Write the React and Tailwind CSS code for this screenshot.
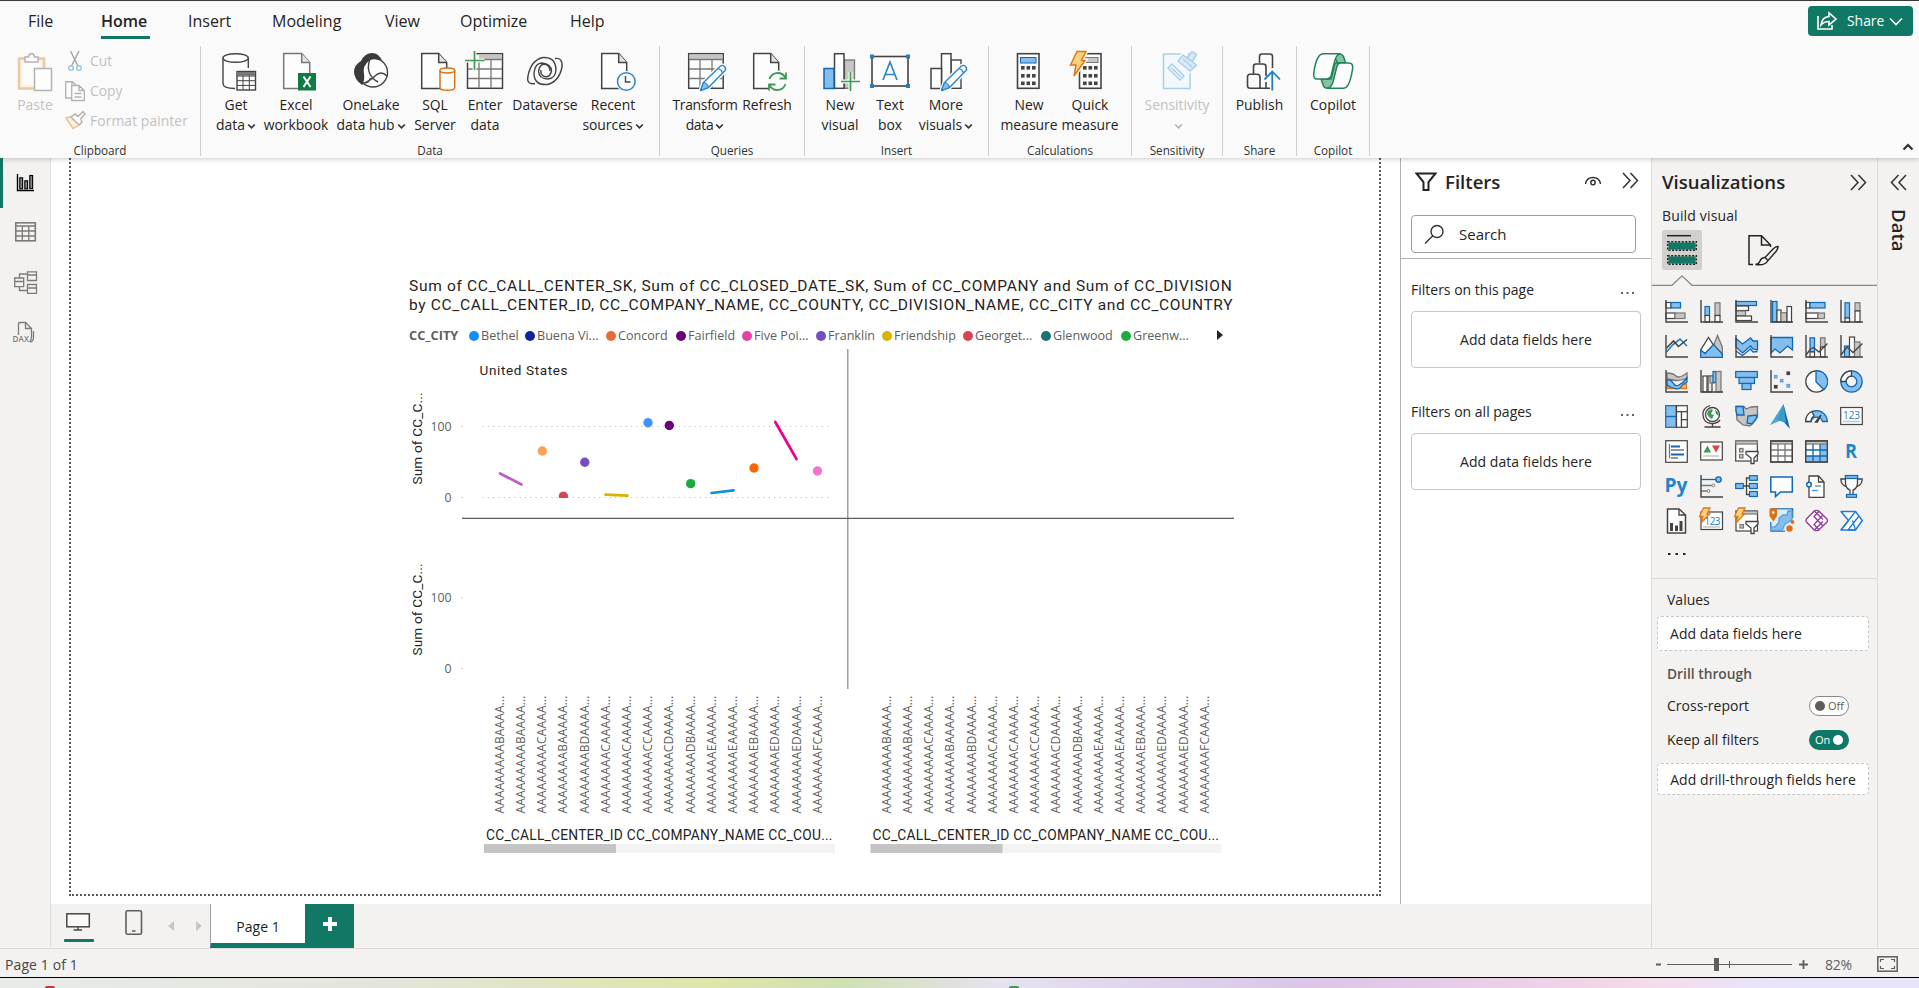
import React from 'react';

const K = '#444342';
const W = '#fdfdfd';
const B = '#83beec';
const BS = '#1267b4';
const G = '#c8c6c4';
const GS = '#797775';

/* ---------- ribbon drawings ---------- */

const Doc = ({ x, y = 53.5, w = 22, h = 35, s = K }) => (
  <g fill={W} stroke={s} strokeWidth="1.5">
    <path d={`M${x} ${y}H${x + w - 8}L${x + w} ${y + 9}V${y + h}H${x}Z`} />
    <path d={`M${x + w - 8} ${y}V${y + 9}H${x + w}`} fill="#e6e5e4" />
  </g>
);

const Pencil = ({ x, y }) => (
  <g transform={`translate(${x} ${y})`} strokeLinejoin="round">
    <path d="M0 26L3 18 20 1.500Q22 0 24 2T24.500 6L8 23Z" fill={W} stroke="#fafafa" strokeWidth="4" />
    <path d="M0 26L3 18 20 1.500Q22 0 24 2T24.500 6L8 23Z" fill={W} stroke="#2a86c8" strokeWidth="1.4" />
    <path d="M0 26L3 18Q7 18.500 8 23Z" fill={B} stroke="#2a86c8" strokeWidth="1.2" />
    <path d="M17.500 4Q21 5 22 8.500" fill="none" stroke="#2a86c8" strokeWidth="1.2" />
  </g>
);

const CalcBody = ({ x }) => (
  <g>
    <rect x={x} y="53.700" width="21.500" height="34.600" fill={W} stroke={K} strokeWidth="1.6" />
    {[66, 74, 81.5].map((y) =>
      [4, 9.5, 15].map((d) => <rect key={`${y}-${d}`} x={x + d - 0.5} y={y} width="3.600" height="3.600" fill={K} />)
    )}
  </g>
);

const art = {
  get: (
    <>
      <path d="M223 57.500V84C223 87 228 88.500 236 88.500V70H248V57.500" fill={W} />
      <path d="M223 58V83.500C223 87 229 88.500 235 88.500M248.300 58V68" fill="none" stroke={K} strokeWidth="1.4" />
      <ellipse cx="235.600" cy="58" rx="12.700" ry="4.300" fill={W} stroke={K} strokeWidth="1.4" />
      <rect x="237" y="71.500" width="18.500" height="18.500" fill={W} stroke={K} strokeWidth="1.4" />
      <rect x="237.600" y="72" width="17.300" height="3.600" fill={GS} />
      <path d="M237 76H255.500M237 80.700H255.500M237 85.400H255.500M243 76V90M249.300 76V90" stroke={K} fill="none" />
    </>
  ),
  excel: (
    <>
      <Doc x={283.7} w={26} s="#797775" />
      <rect x="298" y="73" width="18" height="17.500" fill="#107c41" />
      <path d="M303.500 76.500L310.500 87M310.500 76.500L303.500 87" stroke="#fff" strokeWidth="2" />
    </>
  ),
  onelake: (
    <>
      <circle cx="373" cy="72.500" r="14.500" fill={W} stroke={K} strokeWidth="1.4" />
      <path d="M361 61Q365 53 372 53Q379 53 382 61Q375 58 370 60Q362 66 364 74Q365 80 362 85Q354 79 354 72Q354 65 361 61Z" fill="#3b3a39" />
      <path d="M370 59Q367 67 369.500 73T378 82M362 84Q370 81 375 76Q381 70 387 76M363 83Q369 83 370.500 78" fill="none" stroke={K} strokeWidth="1.4" />
    </>
  ),
  sql: (
    <>
      <Doc x={421.7} w={25} />
      <path d="M440 70.500V87.500C440 89.800 443.500 90.300 447.300 90.300S454.700 89.800 454.700 87.500V70.500" fill={W} stroke="#d97318" strokeWidth="1.5" />
      <ellipse cx="447.300" cy="70.500" rx="7.400" ry="2.400" fill={W} stroke="#d97318" strokeWidth="1.5" />
    </>
  ),
  enter: (
    <>
      <rect x="467.500" y="53.700" width="35" height="34.600" fill={W} stroke={K} strokeWidth="1.5" />
      <rect x="479" y="54.500" width="22.800" height="4.500" fill={G} />
      <path d="M468 59.500H502M468 69H502M468 78.500H502M479 60V88M491 60V88" stroke={GS} strokeWidth="1.3" fill="none" />
      <rect x="463" y="51" width="10.500" height="8.500" fill="#fafafa" />
      <path d="M474.500 50V70M464 60.500H484.500" stroke="#fafafa" strokeWidth="4" />
      <path d="M474.500 51V70M465 60.500H484.500" stroke="#3f9b56" strokeWidth="1.7" />
    </>
  ),
  dataverse: (
    <g fill="none" stroke={K} strokeWidth="1.4">
      <path d="M535 83.500Q526 85 528 76Q531 60 543 57.500Q555 56.500 556 69Q556 78 548 79Q539 79 538.500 71Q540 63 546 64.500Q550 66 550 71" />
      <path d="M555 58.500Q563 57.500 562 67Q559 82 547 84.500Q534 85.500 534 73Q535 63 542 63Q551 64 551.500 71Q550 78 544.500 76.500Q540 75 541 70" />
    </g>
  ),
  recent: (
    <>
      <Doc x={601.7} w={25} />
      <circle cx="626.300" cy="81.500" r="10.500" fill="#fafafa" />
      <circle cx="626.300" cy="81.500" r="8.800" fill={W} stroke="#2a86c8" strokeWidth="1.5" />
      <path d="M625.500 76V82H630.500" fill="none" stroke={K} strokeWidth="1.4" />
    </>
  ),
  transform: (
    <>
      <rect x="688.700" y="53.700" width="34.500" height="34.600" fill={W} stroke={K} strokeWidth="1.5" />
      <rect x="689.500" y="54.500" width="33" height="4.500" fill={G} />
      <path d="M689 59.500H723M689 69H723M689 78.500H723M700 60V88M712 60V88" stroke={GS} strokeWidth="1.3" fill="none" />
      <Pencil x={700.5} y={64.5} />
    </>
  ),
  refresh: (
    <>
      <Doc x={753.7} w={25} />
      <circle cx="777.500" cy="81.500" r="11" fill="#fafafa" />
      <path d="M769.500 79Q771.500 73 778 73Q783 73 785.500 78M786 72.500V78.500H779.500M785.500 84Q783.500 90 777 90Q772 90 769.500 85M769 90.500V84.500H775.500" fill="none" stroke="#3f9b56" strokeWidth="1.8" />
    </>
  ),
  newvisual: (
    <>
      <rect x="844.500" y="60" width="10" height="28.300" fill={G} stroke={GS} strokeWidth="1.3" />
      <rect x="834.500" y="53.700" width="9.500" height="34.600" fill={W} stroke={K} strokeWidth="1.5" />
      <rect x="824" y="68.500" width="10" height="20" fill={B} stroke={BS} strokeWidth="1.5" />
      <rect x="851.500" y="82.500" width="8" height="8" fill="#fafafa" />
      <path d="M850.500 72V91M841 81.500H860" stroke="#fafafa" strokeWidth="4" />
      <path d="M850.500 72V91M841 81.500H860" stroke="#3f9b56" strokeWidth="1.7" />
    </>
  ),
  textbox: (
    <>
      <rect x="872" y="56.500" width="36" height="29.500" fill={W} stroke={K} strokeWidth="1.6" />
      {[[872, 56.5], [908, 56.5], [872, 86], [908, 86]].map(([x, y]) => (
        <rect key={`${x}${y}`} x={x - 2} y={y - 2} width="4" height="4" fill="#1f7fc4" />
      ))}
      <path d="M883 80L890 62 897 80M885.500 74.500H894.500" fill="none" stroke="#2a86c8" strokeWidth="1.7" />
    </>
  ),
  more: (
    <>
      <rect x="951" y="60" width="10" height="28.300" fill={W} stroke={K} strokeWidth="1.4" />
      <rect x="941.500" y="53.700" width="9.500" height="34.600" fill={W} stroke={K} strokeWidth="1.5" />
      <rect x="931" y="68.500" width="10.500" height="20" fill={W} stroke={K} strokeWidth="1.5" />
      <Pencil x={941.5} y={64.5} />
    </>
  ),
  newmeasure: (
    <>
      <CalcBody x={1017.5} />
      <rect x="1020.500" y="57.500" width="15.500" height="5.500" fill={B} stroke={BS} />
    </>
  ),
  quick: (
    <>
      <CalcBody x={1079.5} />
      <rect x="1084" y="57.500" width="14" height="5" fill={G} stroke={GS} />
      <path d="M1077 51.500H1086L1081.500 60.500H1085L1074 76 1076 65H1070.500Z" fill="#fafafa" stroke="#fafafa" strokeWidth="4" />
      <path d="M1077 51.500H1086L1081.500 60.500H1085L1074 76 1076 65H1070.500Z" fill="#fcd37c" stroke="#dd7a1c" strokeWidth="1.5" />
    </>
  ),
  sensitivity: (
    <g fill="#f3f8fc" stroke="#a9cfe8" strokeWidth="1.5">
      <path d="M1163.500 54H1190V88.500H1163.500Z" />
      <path d="M1178 60L1184 52.500 1198 65 1191 72Z" fill="#fafafa" stroke="#fafafa" strokeWidth="3" />
      <path d="M1187 58L1192 51.500 1196.500 54.500 1192 62Z" fill="#d5e8f5" />
      <path d="M1178 61L1183 55 1196.500 65 1190 71Z" fill="#dcebf6" />
      <path d="M1168 68L1172 64 1184 76 1180 80Z" />
      <path d="M1171 67.500L1181 77M1183 59L1192 67" />
    </g>
  ),
  publish: (
    <>
      <g fill="none" stroke={K} strokeWidth="1.6">
        <path d="M1259.500 63V56.500Q1259.500 54 1262 54H1270Q1272.500 54 1272.500 56.500V68M1253.500 74V66.500Q1253.500 64 1256 64H1263Q1266 64 1266 66.500V76M1266 82V88.300" />
        <path d="M1265.500 88.300H1250Q1247.500 88.300 1247.500 85.500V77Q1247.500 74.300 1250 74.300H1257Q1260 74.300 1260 77V88.300H1270" />
      </g>
      <path d="M1272.300 90.500V72.500M1264.500 79.500L1272.300 71.500 1280 79.500" fill="none" stroke="#1f7fc4" strokeWidth="1.8" />
    </>
  ),
  copilot: (
    <g stroke="#218358" strokeWidth="1.5" strokeLinejoin="round">
      <path d="M1333 53.700H1339Q1343 54 1344 58L1345.500 63H1335L1331 79H1321L1323.500 86Q1324.500 88.300 1328 88.300H1334L1339 66Z" fill="#86c2a4" />
      <path d="M1324 53.700H1340Q1337 54 1335 60L1331 76Q1330 79 1326 79H1317Q1313.500 79 1313.700 74Q1315 62 1318.500 57Q1320 53.700 1324 53.700Z" fill={W} />
      <path d="M1343 88.300H1327Q1331 88 1333 82L1337 66Q1338 63 1341 63H1349Q1353 63 1352.700 68Q1351 80 1348 85Q1346.500 88.300 1343 88.300Z" fill={W} />
    </g>
  ),
};

const Caret = ({ c = '#323130' }) => (
  <svg width="9" height="7" viewBox="0 0 9 7" className="ml-[2px] inline-block align-middle">
    <path d="M1.200 1.500L4.500 4.800 7.800 1.500" fill="none" stroke={c} strokeWidth="1.700" />
  </svg>
);

const Tool = ({ name, cx, width, l1, l2, caret, muted, tight }) => (
  <div className={`flex shrink-0 flex-col items-center whitespace-nowrap text-[13.9px] leading-[20px] ${width} ${muted ? 'text-[#c3c1bf]' : 'text-[#252423]'} ${tight ? 'tracking-[-0.3px]' : ''}`}>
    <svg width="48" height="44" viewBox={`${cx - 24} 50 48 44`} className="mb-px shrink-0">{art[name]}</svg>
    <span>{l1}</span>
    <span>{l2}{caret && <Caret c={muted ? '#b5b3b1' : '#323130'} />}</span>
  </div>
);

const Group = ({ label, width, pad = '', children }) => (
  <section className={`flex h-[110px] shrink-0 flex-col border-r border-[#d0cecc] ${width}`}>
    <div className={`flex h-[95px] shrink-0 pt-1 ${pad}`}>{children}</div>
    <div className="text-center text-[11.7px] leading-[18px] text-[#323130]">{label}</div>
  </section>
);

function Ribbon() {
  return (
    <header className="relative z-10 h-[158px] shrink-0 border-t border-[#3b3a39] bg-[#fafafa] shadow-[0_1px_5px_rgba(0,0,0,0.22)]">
      <div className="flex h-[45px] items-start justify-between">
        <nav className="flex pl-[28px] pt-[6px] text-[16px] leading-[28px] text-[#252423]">
          <span className="w-[73px]">File</span>
          <span className="w-[87px]"><span className="inline-block w-[49px] whitespace-nowrap border-b-[3px] border-[#117865] pb-px font-semibold">Home</span></span>
          <span className="w-[84px]">Insert</span>
          <span className="w-[113px]">Modeling</span>
          <span className="w-[75px]">View</span>
          <span className="w-[110px]">Optimize</span>
          <span>Help</span>
        </nav>
        <button className="mr-[6px] mt-[5px] flex h-[30px] w-[105px] items-center rounded bg-[#117865] pl-[8px] text-[13.9px] text-white">
          <svg width="22" height="20" viewBox="0 0 22 20" fill="none" stroke="#fff" strokeWidth="1.600">
            <path d="M2 5V18H16V14M13 2V5.500Q6 6 5 14Q8 10.500 13 10.500V14L20 8Z" />
          </svg>
          <span className="ml-[9px]">Share</span>
          <svg width="14" height="9" viewBox="0 0 14 9" className="ml-[5px]"><path d="M1 1.500L7 7.500 13 1.500" fill="none" stroke="#fff" strokeWidth="1.600" /></svg>
        </button>
      </div>
      <div className="flex">
        <Group label="Clipboard" width="w-[201px]">
          <div className="flex w-[62px] flex-col items-center pl-[8px] text-[13.9px] leading-[20px] text-[#c3c1bf]">
            <svg width="48" height="44" viewBox="14 50 48 44" className="mb-px shrink-0">
              <rect x="22" y="58.500" width="25" height="30" fill="#fdf1dc" stroke="#ecc8a0" strokeWidth="2.500" />
              <rect x="25.500" y="62" width="18" height="23" fill={W} />
              <path d="M28 62V57H31.500Q32 53.500 34.500 53.500T37.500 57H41V62Z" fill={W} stroke="#b5b3b1" strokeWidth="1.500" />
              <rect x="37.500" y="68.500" width="17" height="22" fill={W} stroke="#b5b3b1" strokeWidth="1.500" />
            </svg>
            <span>Paste</span>
          </div>
          <div className="flex flex-col pl-[2px] text-[13.9px] leading-[30px] text-[#c3c1bf]">
            <div className="-mt-[4px] flex items-center gap-[4px]">
              <svg width="22" height="22" viewBox="64 50 22 22" fill="none" strokeWidth="1.500">
                <path d="M70.500 51L78 66M79 51L71.500 66" stroke="#a9a7a5" />
                <circle cx="71" cy="68" r="2.300" stroke="#9cc6e3" /><circle cx="79" cy="68" r="2.300" stroke="#9cc6e3" />
              </svg>Cut
            </div>
            <div className="flex items-center gap-[4px]">
              <svg width="22" height="22" viewBox="64 80 22 22" fill={W} stroke="#b5b3b1" strokeWidth="1.400">
                <path d="M71.500 98H65.700V81.700H72.500L76 85M72 81.700V85.500" />
                <path d="M71.700 85.500H79L84.300 90.500V100.500H71.700ZM79 85.500V90.500H84M74.500 93.500H81.500M74.500 97H81.500" />
              </svg>Copy
            </div>
            <div className="flex items-center gap-[4px] tracking-[0.07px]">
              <svg width="22" height="22" viewBox="64 110 22 22" fill={W} strokeWidth="1.400">
                <path d="M66 118L73 128.500 80 124.500 73.500 116Z" fill="#fdeedd" stroke="#ecbf92" />
                <path d="M71 117L75 114 78 116.500 83 111.500 85 114 80.500 119 82 122 79 125Z" stroke="#b5b3b1" />
              </svg>Format painter
            </div>
          </div>
        </Group>
        <Group label="Data" width="w-[459px]" pad="pl-[10px]">
          <Tool name="get" cx={236} width="w-[50px]" l1="Get" l2="data" caret />
          <Tool name="excel" cx={296} width="w-[70px]" l1="Excel" l2="workbook" />
          <Tool name="onelake" cx={371} width="w-[80px]" l1="OneLake" l2="data hub" caret />
          <Tool name="sql" cx={435} width="w-[48px]" l1="SQL" l2="Server" />
          <Tool name="enter" cx={485} width="w-[52px]" l1="Enter" l2="data" />
          <Tool name="dataverse" cx={545} width="w-[68px]" l1="Dataverse" />
          <Tool name="recent" cx={613} width="w-[68px]" l1="Recent" l2="sources" caret />
        </Group>
        <Group label="Queries" width="w-[145px]" pad="pl-[12px]">
          <Tool name="transform" cx={705} width="w-[66px]" l1="Transform" l2="data" caret tight />
          <Tool name="refresh" cx={767} width="w-[58px]" l1="Refresh" />
        </Group>
        <Group label="Insert" width="w-[184px]" pad="pl-[12px]">
          <Tool name="newvisual" cx={840} width="w-[46px]" l1="New" l2="visual" />
          <Tool name="textbox" cx={890} width="w-[54px]" l1="Text" l2="box" />
          <Tool name="more" cx={946} width="w-[58px]" l1="More" l2="visuals" caret />
        </Group>
        <Group label="Calculations" width="w-[143px]" pad="pl-[12px]">
          <Tool name="newmeasure" cx={1029} width="w-[56px]" l1="New" l2="measure" />
          <Tool name="quick" cx={1090} width="w-[66px]" l1="Quick" l2="measure" />
        </Group>
        <Group label="Sensitivity" width="w-[91px]" pad="justify-center">
          <Tool name="sensitivity" cx={1177} width="w-[80px]" l1="Sensitivity" caret muted />
        </Group>
        <Group label="Share" width="w-[74px]" pad="justify-center">
          <Tool name="publish" cx={1260} width="w-[70px]" l1="Publish" />
        </Group>
        <Group label="Copilot" width="w-[73px]" pad="justify-center">
          <Tool name="copilot" cx={1333} width="w-[70px]" l1="Copilot" />
        </Group>
        <svg width="12" height="8" viewBox="0 0 12 8" className="ml-auto mr-[5px] mt-[97px]"><path d="M1.500 6.500L6 2 10.500 6.500" fill="none" stroke="#323130" strokeWidth="2.200" /></svg>
      </div>
    </header>
  );
}

/* ---------- left rail ---------- */

function Rail() {
  return (
    <aside className="flex w-[51px] shrink-0 flex-col border-r border-[#e1dfdd] bg-[#f3f2f1]">
      <div className="h-[50px] border-l-[3px] border-[#117865]">
        <svg width="44" height="50" viewBox="3 158 44 50" fill="#8a8886" stroke="#000" strokeWidth="1.100">
          <path d="M17.500 174V190.500H34" fill="none" strokeWidth="1.400" />
          <rect x="19.800" y="177.800" width="2.800" height="11" /><rect x="24.800" y="180.800" width="2.800" height="8" /><rect x="29.800" y="175.500" width="2.800" height="13" />
        </svg>
      </div>
      <svg width="50" height="50" viewBox="0 208 50 50" fill="none" stroke="#7d7b79" strokeWidth="1.300">
        <rect x="15.800" y="222.800" width="19.500" height="18" strokeWidth="1.600" /><path d="M16 226H35M16 231H35M16 236H35M22.300 226V241M28.800 226V241" />
      </svg>
      <svg width="50" height="50" viewBox="0 258 50 50" fill="none" stroke="#7d7b79" strokeWidth="1.300">
        <path d="M14.700 278H23.700V286.700H14.700ZM14.700 281.500H23.700M27.500 271.800H36.500V280.500H27.500ZM27.500 275H36.500M27.500 284.500H36.500V293.300H27.500ZM27.500 288H36.500M19.500 278V274H27.500M19.500 286.700V290.500H27.500" />
      </svg>
      <svg width="50" height="50" viewBox="0 308 50 50" fill="none" stroke="#7d7b79" strokeWidth="1.300">
        <path d="M18.500 335V324Q18.500 322.500 20 322.500H25.500L31.500 328.500V337Q31.500 340 29.500 342M25.500 322.500V328.500H31.500M33.500 331V337Q33.500 341 30.500 342.200" />
        <text x="12.500" y="342.300" fontSize="8" fontFamily="Open Sans" fontWeight="600" fill="#7d7b79" stroke="none" textLength="16.500">DAX</text>
      </svg>
    </aside>
  );
}

/* ---------- report canvas ---------- */

const legend = [
  ['Bethel', '#118dff', 'w-[56px]'], ['Buena Vi...', '#12239e', 'w-[81px]'], ['Concord', '#e66c37', 'w-[70px]'],
  ['Fairfield', '#6b007b', 'w-[66px]'], ['Five Poi...', '#e044a7', 'w-[74px]'], ['Franklin', '#744ec2', 'w-[66px]'],
  ['Friendship', '#d9b300', 'w-[81px]'], ['Georget...', '#d64550', 'w-[78px]'], ['Glenwood', '#197278', 'w-[80px]'],
  ['Greenw...', '#1aab40', 'w-[91px]'],
];

const dots = [
  [542.3, 452, '#ffa058'], [584.8, 463.3, '#744ec2'], [648, 423.7, '#4092ff'], [669.3, 426.5, '#6b007b'],
  [690.7, 484.6, '#1aab40'], [754, 469, '#fe6600'], [817.5, 472, '#f472d0'],
];
const segs = [
  [500, 474.5, 521.5, 485.5, '#be5dc9'], [605.5, 495.7, 627.5, 496.6, '#d9b300'],
  [711.5, 494, 733.5, 491.4, '#1090d8'], [775.3, 423, 796.5, 460, '#ec008c'],
];

const suffix = ['AB', 'AB', 'AC', 'BA', 'BD', 'CA', 'CA', 'CC', 'CD', 'DB', 'EA', 'EA', 'EB', 'ED', 'ED', 'FC'];

function Plot() {
  const ui = 'Open Sans, sans-serif';
  const din = 'Roboto, sans-serif';
  return (
    <svg width="830" height="510" viewBox="409 350 830 510" className="block">
      <path d="M847.800 350V690" stroke="#8f8d8b" strokeWidth="1.300" />
      <path d="M462 519.300H1234" stroke="#605e5c" strokeWidth="1.200" />
      <text x="479.500" y="376" fontFamily={din} fontSize="13.500" fill="#252423" textLength="88">United States</text>
      {[[427.5, '100'], [498.5, '0'], [598.5, '100'], [669.5, '0']].map(([y, t]) => (
        <g key={y}>
          <text x="451.500" y={y + 4.2} fontFamily={ui} fontSize="12.300" fill="#605e5c" textAnchor="end">{t}</text>
          <path d={`M461 ${y}H462.500`} stroke="#c8c6c4" />
        </g>
      ))}
      <path d="M482.500 427.500H832M482.500 498.500H832" stroke="#c8c6c4" strokeWidth="1.200" strokeDasharray="1.300 4" />
      {dots.map(([x, y, c]) => <circle key={x} cx={x} cy={y} r="4.700" fill={c} />)}
      <path d="M559.200 499A4.600 4.600 0 1 1 567.600 499Z" fill="#d64550" />
      {segs.map(([x1, y1, x2, y2, c]) => <path key={x1} d={`M${x1} ${y1}L${x2} ${y2}`} stroke={c} strokeWidth="2.700" strokeLinecap="round" />)}
      {[485.5, 656.5].map((y) => (
        <text key={y} transform={`translate(422 ${y}) rotate(-90)`} fontFamily={din} fontSize="13.600" fill="#252423" textLength="92">Sum of CC_C...</text>
      ))}
      {[499.5, 886.5].map((x0) => suffix.map((s, i) => (
        <text key={`${x0}-${i}`} transform={`translate(${x0 + i * 21.2 + 4.2} 814.500) rotate(-90)`} fontFamily={ui} fontSize="12" fill="#605e5c" textLength="118">
          {`AAAAAAAA${s}AAAA...`}
        </text>
      )))}
      {[486, 872.5].map((x) => (
        <g key={x}>
          <text x={x} y="840.700" fontFamily={din} fontSize="13.800" fill="#252423" textLength="346.500">CC_CALL_CENTER_ID CC_COMPANY_NAME CC_COU...</text>
          <rect x={x - 2} y="845" width="351" height="9" fill="#f3f3f3" />
          <rect x={x - 2} y="845" width="132" height="9" fill="#c4c4c4" />
        </g>
      ))}
    </svg>
  );
}

function Canvas() {
  return (
    <main className="h-[746px] bg-white pl-[18px]">
      <div className="h-[738px] w-[1312px] border-2 border-t-0 border-dotted border-[#5a5856] pl-[338px] pt-[119px]">
        <h2 className="whitespace-nowrap font-[Roboto] text-[15.5px] leading-[19px] text-[#252423]">
          <span className="block tracking-[0.69px]">Sum of CC_CALL_CENTER_SK, Sum of CC_CLOSED_DATE_SK, Sum of CC_COMPANY and Sum of CC_DIVISION</span>
          <span className="block tracking-[0.66px]">by CC_CALL_CENTER_ID, CC_COMPANY_NAME, CC_COUNTY, CC_DIVISION_NAME, CC_CITY and CC_COUNTRY</span>
        </h2>
        <div className="mt-[11px] flex h-[20px] items-center whitespace-nowrap text-[12.6px] text-[#605e5c]">
          <span className="w-[60px] text-[12.8px] font-bold">CC_CITY</span>
          {legend.map(([t, c, w]) => (
            <span key={t} className={`flex shrink-0 items-center gap-[2px] ${w}`}>
              <svg width="10" height="10"><circle cx="5" cy="5" r="5" fill={c} /></svg>{t}
            </span>
          ))}
          <svg width="6" height="10" viewBox="0 0 6 10" className="-mt-[2px] ml-[5px]"><path d="M0 0L6 5 0 10Z" fill="#252423" /></svg>
        </div>
        <div className="mt-[3px]"><Plot /></div>
      </div>
    </main>
  );
}

function PageTabs() {
  return (
    <div className="flex h-[44px] bg-[#f3f2f1]">
      <svg width="159" height="44" viewBox="51 904 159 44" fill="none">
        <rect x="66.800" y="913.800" width="22.500" height="13" fill="#faf9f8" stroke="#494745" strokeWidth="1.500" />
        <path d="M78 927V930M73.500 930H82" stroke="#494745" strokeWidth="1.400" />
        <rect x="64" y="939" width="30" height="3" rx="1" fill="#117865" />
        <rect x="126" y="910.800" width="15.500" height="23.500" rx="1.500" stroke="#605e5c" strokeWidth="1.600" />
        <path d="M132 931H135.500" stroke="#605e5c" strokeWidth="1.500" />
        <path d="M174 921V931L168 926ZM196 921V931L202 926Z" fill="#c8c6c4" />
      </svg>
      <div className="flex h-[44px] w-[95px] items-center justify-center border-b-[5px] border-l border-b-[#117865] border-l-[#a19f9d] bg-white pt-[6px] text-[14px] font-medium text-[#201f1e]">Page 1</div>
      <div className="flex h-[44px] w-[49px] items-center justify-center bg-[#117865] pb-[4px]">
        <svg width="14" height="14"><path d="M7 0V14M0 7H14" stroke="#fff" strokeWidth="4" /></svg>
      </div>
    </div>
  );
}

/* ---------- panes ---------- */

const Chevrons = ({ flip }) => (
  <svg width="17" height="17" viewBox="0 0 17 17" className={flip ? '-scale-x-100' : ''}>
    <path d="M1 1L8 8.500 1 16M8.500 1L15.500 8.500 8.500 16" fill="none" stroke="#323130" strokeWidth="1.500" />
  </svg>
);

const Well = ({ title, mt }) => (
  <div className={mt}>
    <div className="flex h-[20px] items-center justify-between pr-[16px]">
      <span>{title}</span>
      <svg width="15" height="4" className="mt-[8px]"><path d="M1 2H3M6.500 2H8.500M12 2H14" stroke="#323130" strokeWidth="1.500" /></svg>
    </div>
    <div className="mt-[12px] flex h-[57px] w-[230px] items-center justify-center rounded-sm border border-[#c8c6c4] tracking-[0.05px]">Add data fields here</div>
  </div>
);

function Filters() {
  return (
    <aside className="h-[746px] w-[251px] shrink-0 border-l border-[#b3b0ad] bg-white text-[14px] text-[#252423]">
      <div className="flex h-[101px] flex-col border-b border-[#b3b0ad] px-[10px] pt-[10px]">
        <div className="flex h-[28px] items-center">
          <svg width="22" height="20" viewBox="0 0 22 20" className="ml-[4px]"><path d="M1.500 1.500H20.500L13.500 10V18H8.500V10Z" fill="none" stroke="#252423" strokeWidth="2" /></svg>
          <span className="ml-[8px] w-[139px] text-[18.6px] font-semibold">Filters</span>
          <svg width="18" height="10" viewBox="0 0 18 10" fill="none" stroke="#323130" strokeWidth="1.400" className="-mt-[2px]"><path d="M1.500 8Q2.500 1.500 9 1.500T16.500 8" /><circle cx="9" cy="6.500" r="2.200" /></svg>
          <span className="-mt-[3px] ml-[20px]"><Chevrons /></span>
        </div>
        <div className="mt-[19px] flex h-[38px] w-[225px] shrink-0 items-center rounded-sm border border-[#a19f9d] pl-[12px] text-[15px]">
          <svg width="21" height="21" viewBox="0 0 21 21" fill="none" stroke="#323130" strokeWidth="1.400"><circle cx="13" cy="7.500" r="6" /><path d="M8.800 11.700L1 19.500" /></svg>
          <span className="ml-[14px]">Search</span>
        </div>
      </div>
      <div className="pl-[10px]">
        <Well title="Filters on this page" mt="mt-[20px]" />
        <Well title="Filters on all pages" mt="mt-[33px]" />
      </div>
    </aside>
  );
}

const Axis = () => <path d="M1 0V22H23" fill="none" stroke={K} strokeWidth="1.400" />;
const R = ({ x, y, w, h, f = W, s = K }) => <rect x={x} y={y} width={w} height={h} fill={f} stroke={s} strokeWidth="1.200" />;
const Bl = (p) => <R f={B} s={BS} {...p} />;
const Gr = (p) => <R f={G} s={GS} {...p} />;
const Bolt = () => <path d="M3.500 -2H10L7 4H9.500L1 13 3 6.500H-.500Z" fill="#fcd37c" stroke="#dd7a1c" strokeWidth="1.300" />;
const Funnel = () => <path d="M11 11.500H23V14L19 18V23.500H16V18L11 14Z" fill={W} stroke={K} strokeWidth="1.300" />;
const L = ({ d, s = K, f = 'none', w = 1.3 }) => <path d={d} fill={f} stroke={s} strokeWidth={w} />;

const visuals = [
  <><R x={1} y={2.5} w={5} h={5.5} /><Bl x={6} y={2.5} w={9.5} h={5.5} /><R x={1} y={13} w={9} h={5.5} /><Gr x={10} y={13} w={10} h={5.5} /><Axis /></>,
  <><Bl x={5} y={6.5} w={4.5} h={9} /><R x={5} y={15.5} w={4.5} h={6.5} /><Gr x={15} y={2.8} w={5} h={12.5} /><R x={15} y={15.5} w={5} h={6.5} /><Axis /></>,
  <><Bl x={1} y={1.5} w={20.5} h={4} /><R x={1} y={6} w={12.5} h={4.5} /><Gr x={1} y={11} w={9.5} h={5} /><R x={1} y={16} w={15.5} h={4.5} /><Axis /></>,
  <><Bl x={2.5} y={1.5} w={4.5} h={20.5} /><R x={7} y={10} w={4} h={12} /><Gr x={11} y={12.7} w={6} h={9.3} /><R x={17} y={6.5} w={4.5} h={15.5} /><Axis /></>,
  <><R x={1} y={2.5} w={4} h={5.5} /><Bl x={5} y={2.5} w={15} h={5.5} /><R x={1} y={13} w={12} h={5.5} /><Gr x={13} y={13} w={6.5} h={5.5} /><Axis /></>,
  <><Bl x={5} y={2.8} w={4.5} h={15.2} /><R x={5} y={18} w={4.5} h={4} /><Gr x={15} y={2.8} w={5} h={8} /><R x={15} y={11} w={5} h={11} /><Axis /></>,
  <><L d="M1.500 17L8 9.500 15 4 22 11" s="#1f7fc4" w={1.6} /><L d="M1.500 13L8.500 6 13.500 11.500 22 4.500" w={1.6} /><Axis /></>,
  <><L d="M.700 15L8.500 2.500 14 11V18H.700Z" f={W} /><L d="M13 12L17.500 .500 22.300 12V22H13Z" s={GS} f={G} /><L d="M.700 15L5 18.500 13.500 9.500 22.300 19V22.300H.700Z" s={BS} f={B} /></>,
  <><L d="M1 3.500L7.500 9 15.500 3 18 6 22.500 6V15L18 14 15.500 11 7.500 18 1 12Z" s={BS} f={B} /><L d="M1 16L7.500 20.500 15.500 14 18 17 22.500 16.500" s={BS} /><Axis /></>,
  <><L d="M1 2.500H22.500V15L17.500 11 10 18 5 14 1 18Z" s={BS} f={B} /><Axis /></>,
  <><Bl x={5} y={2.8} w={4.5} h={14} /><R x={5} y={17} w={4.5} h={5} /><Gr x={15.5} y={2.8} w={4.5} h={9} /><R x={15.5} y={12} w={4.5} h={10} /><L d="M1 20L5.500 14 8.500 12.500 14 17 22.500 8.500" /><Axis /></>,
  <><Bl x={4.5} y={11} w={5} h={11} /><R x={9.5} y={2} w={5} h={20} /><Gr x={14.5} y={7} w={5.5} h={15} /><L d="M1 20L7 12 13 17.500 22.500 8.500" /><Axis /></>,
  <><L d="M2 14H9Q12 20 16 14H21.500V18.500H2Z" s="#dd7a1c" f="#f7b26a" /><L d="M2 3Q8 3 11 6T22 3V8Q15 11 11 10.500T2 9Z" s={GS} f={G} /><L d="M2 10Q6 9 8 13T14 15 22 8V12Q18 14 16 17T8 18 2 14Z" s={BS} f={B} /><Axis /></>,
  <><R x={3} y={6} w={4} h={16} /><R x={8} y={6} w={4} h={16} f="#e6e5e4" /><Gr x={10} y={6} w={4} h={7} /><Bl x={13} y={1.5} w={3} h={11} /><Gr x={16} y={1.5} w={5} h={20.5} /><Axis /></>,
  <><Bl x={0.7} y={1.5} w={21.6} h={6} /><Bl x={4} y={7.5} w={15.5} h={6} /><Bl x={7} y={13.5} w={9} h={6} /></>,
  <><Bl x={4.5} y={5.5} w={2.4} h={2.4} s="#5ba0dc" /><Bl x={10.5} y={9.5} w={2.4} h={2.4} s="#5ba0dc" /><Bl x={17} y={14.5} w={2.6} h={2.6} s="#5ba0dc" /><R x={4.5} y={15.5} w={2.5} h={2.5} f={K} /><R x={17} y={2} w={2.5} h={2.5} f={K} /><Axis /></>,
  <><circle cx="11.500" cy="11.500" r="10.700" fill={W} stroke={K} strokeWidth="1.300" /><L d="M11 .800A10.700 10.700 0 0 1 19 19.500L11 12Z" s={BS} f={B} /></>,
  <><circle cx="11.500" cy="11.500" r="8" fill="none" stroke={BS} strokeWidth="6.600" /><circle cx="11.500" cy="11.500" r="8" fill="none" stroke={B} strokeWidth="4.200" /><L d="M.800 11.500A10.700 10.700 0 0 1 11.500 .800V6A5.500 5.500 0 0 0 6 11.500Z" f={W} /></>,
  <><Bl x={0.7} y={0.7} w={10.5} h={21.6} /><L d="M.700 11.500H11" s={BS} /><R x={11.5} y={0.7} w={10.8} h={6} /><R x={11.5} y={6.7} w={5} h={15.6} /><R x={16.5} y={6.7} w={5.8} h={8} /><R x={16.5} y={14.7} w={5.8} h={7.6} /></>,
  <><circle cx="12.500" cy="9.500" r="7" fill={W} stroke={K} strokeWidth="1.300" /><path d="M8 6Q11 3 13 5L11 9 14 10 12 14Q8 12 7 9ZM15 5L18.500 7V11L16 9Z" fill="#3f9b56" /><L d="M10 .500Q2 3 3 10.500T11 18.500Q17 19 20 15M12.500 19V22M4.500 22H20.500" /></>,
  <><L d="M1 1.500H9L11 4 16 2 22.500 1.500V12L18 18 15 21 8 20 2 15Z" s={GS} f={G} /><L d="M1 1.500H8L9 10H2L1 6Z" s={BS} f={B} /><L d="M13 11L22 10 21 14 17 19 12 18Z" s={BS} f={B} /></>,
  <><path d="M13.500 -1L0 20 12 15Z" fill="#4ba5d8" /><path d="M13.500 -1L20 24 12 15Z" fill="#1267b4" /><path d="M13.500 -1L16 18 7 15Z" fill="#3c9bc9" /></>,
  <><L d="M.700 16.500A10.800 10.800 0 0 1 22.300 16.500H17.500A6 6 0 0 0 6 16.500Z" s={BS} f={B} /><L d="M.700 16.500A10.800 10.800 0 0 1 7 6.500L9 11A6 6 0 0 0 6 16.500Z" f={W} /><L d="M10.500 17L16 10 12.500 17Z" f={K} /></>,
  <><R x={0.7} y={2.5} w={21.6} h={17} /><text x="3" y="13.500" fontSize="10" fontFamily="Open Sans" fill="#1f7fc4" textLength="17">123</text><L d="M3 16.500H20" s={G} w={1.5} /></>,
  <><R x={0.7} y={0.7} w={21.6} h={21.6} /><L d="M4.500 4V18.500" s={GS} /><L d="M6 6.500H15M6 14.500H19" s={BS} w={2} /><L d="M6 10H19M6 18H13" s={GS} /></>,
  <><R x={0.7} y={2} w={21.6} h={18} /><path d="M3.500 12.500L7.500 5.500 11 12.500Z" fill="#3f9b56" /><path d="M12 5.500H20L16 12.500Z" fill="#e04046" /><L d="M3 16H19" s={G} w={1.5} /></>,
  <><R x={0.7} y={1} w={21.6} h={20} /><Gr x={0.7} y={1} w={21.6} h={3} /><Gr x={4.5} y={8.5} w={3.5} h={3.5} /><Gr x={4.5} y={14.5} w={3.5} h={3.5} /><Funnel /></>,
  <><R x={0.7} y={1} w={21.6} h={21} /><Gr x={0.7} y={1} w={21.6} h={3} /><L d="M1 10H22M1 16H22M8 4V22M15 4V22" s={GS} /><L d="M.700 1H22.300V22H.700Z" /></>,
  <><R x={0.7} y={1} w={21.6} h={21} /><rect x="1" y="16" width="21" height="5.700" fill={B} /><rect x="15" y="4" width="7" height="12" fill={B} /><Gr x={0.7} y={1} w={21.6} h={3} /><L d="M1 10H22M1 16H22M8 4V22M15 4V22" s={BS} /><L d="M.700 1H22.300V22H.700Z" /></>,
  <text x="5" y="18" fontSize="19" fontFamily="Open Sans" fontWeight="700" fill="#1f86c8" textLength="12" lengthAdjust="spacingAndGlyphs">R</text>,
  <text x="-0.500" y="16.500" fontSize="20" fontFamily="Open Sans" fontWeight="700" fill="#1f86c8" textLength="23" lengthAdjust="spacingAndGlyphs">Py</text>,
  <><L d="M1 4.500H16" s={BS} /><circle cx="18.500" cy="4.500" r="2.700" fill={B} stroke={BS} strokeWidth="1.300" /><L d="M1 10.500H12M1 16H7" s={GS} /><circle cx="13.500" cy="10.500" r="1.400" fill={W} stroke={GS} /><circle cx="8.500" cy="16" r="1.400" fill={W} stroke={GS} /><Axis /></>,
  <><L d="M8 11H15M15 3H11.500V19.500H15" /><Bl x={0.7} y={8.5} w={7.5} h={5} /><Bl x={14.5} y={0.7} w={7.8} h={4.6} /><Bl x={14.5} y={8.5} w={7.8} h={5} /><Bl x={14.5} y={16.5} w={7.8} h={5} /></>,
  <L d="M.800 2H22.300V17H10.500L5.500 21.500V17H.800Z" s={BS} f={W} w={1.5} />,
  <><L d="M4 7V1H13.500L19 7V22.300H4V12" f={W} /><L d="M13.500 1V7H19" /><L d="M10 11H16M7 15.500H13" s="#5ba0dc" /><circle cx="4" cy="9.500" r="2.300" fill={W} stroke={BS} strokeWidth="1.500" /></>,
  <><L d="M5.500 4H.800Q1 10 6 11.500M17.500 4H22.200Q22 10 17 11.500" /><L d="M5.500 1H17.500V9Q16.500 14 13 15V20H10V15Q6.500 14 5.500 9Z" f={W} /><Bl x={5.5} y={0.5} w={12} h={3} /><Bl x={6.5} y={19.5} w={10} h={2.8} /></>,
  <><L d="M2.500 -1H14L20.500 5V23H2.500Z" f={W} w={1.5} /><L d="M14 -1V5H20.500" /><path d="M5 13H8V21H5ZM10 15.500H13V21H10ZM14.500 11H17.500V21H14.500Z" fill={K} /></>,
  <><R x={1} y={2} w={21.5} h={17.5} /><text x="4.500" y="14.500" fontSize="10" fontFamily="Open Sans" fill="#1f7fc4" textLength="16">123</text><L d="M3 17H20" s={G} w={1.5} /><Bolt /></>,
  <><R x={1} y={1} w={21.5} h={20} /><Gr x={1} y={1} w={21.5} h={3} /><Gr x={5} y={14.5} w={3.5} h={3.5} /><Funnel /><Bolt /></>,
  <><L d="M1 -1H22.500V8M15 21H1V12M22.500 -1H9" s={BS} w={1.6} /><rect x="1.500" y="-.500" width="20" height="21" fill="#dceefa" /><L d="M1 20.500V17H5L9 12V8L13 5H17L18 1H22V10L15 14 12 20.500Z" s="#5ba0dc" f={B} /><path d="M-.500 -1.500H7V6L3.500 11.500 -.500 6Z" fill="#e07010" /><circle cx="3.200" cy="2.500" r="1.200" fill="#fff" /><circle cx="19.500" cy="18.500" r="3.200" fill="#e07010" /><circle cx="22.500" cy="12" r="1.900" fill="#e07010" /></>,
  <g fill="none" stroke="#8f3f9d" strokeWidth="1.400" strokeLinejoin="round"><path d="M14 1.200Q11.500 -.500 9 1.200L1.500 9Q.300 10.500 1.500 12L9 19.800Q11.500 21.500 14 19.800L22 12Q23 10.500 22 9Z" fill={W} /><path d="M9.500 1.200L18 9.500M14 1.200L9 6.500 17.500 15.500M17.500 5.500L9 14.500 14 19.800M9.500 19.800L18 11.500" /></g>,
  <g fill="none" stroke="#1f7fd6" strokeWidth="1.500" strokeLinejoin="round"><path d="M1 1.500H15.500L22.300 10.500 15.500 20H1L8.500 10.500Z" fill={W} /><path d="M1 20L15.500 1.500M8 20L19 6M12.500 10.500L15.500 20H8" strokeWidth="1.300" /></g>,
];

function Visualizations() {
  return (
    <aside className="flex w-[227px] shrink-0 flex-col border-x border-[#dddbd9] bg-[#f3f2f1] text-[14px] text-[#252423]">
      <div className="flex h-[48px] items-center justify-between pl-[10px] pr-[10px]">
        <span className="text-[18.6px] font-semibold">Visualizations</span><Chevrons />
      </div>
      <div className="-mt-[1px] h-[25px] pl-[10px] font-medium leading-[22px] tracking-[0.15px]">Build visual</div>
      <svg width="225" height="56" viewBox="1652 230 225 56" className="shrink-0">
        <rect x="1662" y="230" width="40" height="40" rx="2" fill="#d2d0ce" />
        <path d="M1667 235.700H1691" stroke="#252423" strokeWidth="1.500" />
        <g fill="#117865" stroke="#d2d0ce" strokeWidth="1.500"><rect x="1667.700" y="241.700" width="28.600" height="8.600" /><rect x="1667.700" y="255.700" width="28.600" height="8.600" /></g>
        <g fill="none" stroke="#252423" strokeWidth="1.500" strokeDasharray="2 1.500"><rect x="1667.700" y="241.700" width="28.600" height="8.600" /><rect x="1667.700" y="255.700" width="28.600" height="8.600" /></g>
        <path d="M1753 264.500H1749V235.700H1761.500L1770.500 245V247M1761.500 236V245H1770" fill="none" stroke="#252423" strokeWidth="1.500" />
        <path d="M1778 246.500Q1776 246 1773 249L1765 257.500 1768 260.500 1776 251.500Q1778.500 248 1778 246.500ZM1764.500 257.500Q1761 258 1760 261T1755.500 264.500Q1765 266 1768 260.500" fill="none" stroke="#252423" strokeWidth="1.400" />
        <path d="M1652 285.300H1672L1682 275.800 1692 285.300H1877" fill="none" stroke="#8a8886" strokeWidth="1.200" />
      </svg>
      <div className="mt-[14px] grid grid-cols-6 auto-rows-[35px] pl-[13px] pr-[2px]">
        {visuals.map((v, i) => <svg key={i} width="24" height="24" viewBox="0 0 24 24" className="overflow-visible">{v}</svg>)}
      </div>
      <div className="h-[34px] border-b border-[#dddbd9] pl-[16px] pt-[7px]">
        <svg width="20" height="4"><path d="M0 2H2.500M7.500 2H10M15 2H17.500" stroke="#252423" strokeWidth="2" /></svg>
      </div>
      <div className="mt-[10px] pl-[15px] leading-[22px]">Values</div>
      <div className="ml-[5px] mt-[5px] flex h-[35px] w-[212px] items-center rounded-sm border border-dashed border-[#c8c6c4] bg-white pl-[12px] tracking-[0.05px]">Add data fields here</div>
      <div className="mt-[12px] pl-[15px] text-[13.8px] font-semibold leading-[22px] text-[#555351]">Drill through</div>
      <div className="mt-[11px] flex h-[20px] items-center justify-between pl-[15px] pr-[28px]">
        <span className="-mt-px">Cross-report</span>
        <span className="flex h-[20px] w-[40px] items-center gap-[3px] rounded-full border border-[#8a8886] bg-white pl-[5px] text-[11px] text-[#605e5c]"><i className="h-[10px] w-[10px] shrink-0 rounded-full bg-[#605e5c]" />Off</span>
      </div>
      <div className="mt-[14px] flex h-[20px] items-center justify-between pl-[15px] pr-[28px]">
        <span className="-mt-px">Keep all filters</span>
        <span className="flex h-[20px] w-[40px] items-center gap-[3px] rounded-full bg-[#117865] pl-[6px] text-[11px] text-white">On<i className="h-[10px] w-[10px] shrink-0 rounded-full bg-white" /></span>
      </div>
      <div className="ml-[5px] mt-[13px] flex h-[32px] w-[212px] items-center justify-center whitespace-nowrap rounded-sm border border-dashed border-[#c8c6c4] bg-white tracking-[0.07px]">Add drill-through fields here</div>
    </aside>
  );
}

function StatusBar() {
  return (
    <footer className="flex h-[29px] shrink-0 items-center border-t border-[#dddbd9] bg-[#f3f2f1] pl-[5px] pt-[2px] text-[14px] text-[#484644]">
      <span className="tracking-[0.1px]">Page 1 of 1</span>
      <svg width="155" height="16" viewBox="1655 955 155 16" className="ml-auto">
        <path d="M1656 963.500H1661M1799 963.500H1808M1803.500 959V968" stroke="#605e5c" strokeWidth="1.800" />
        <path d="M1667 963.500H1792M1729.500 960V967" stroke="#605e5c" />
        <rect x="1714" y="957" width="5" height="13" fill="#605e5c" />
      </svg>
      <span className="ml-[15px] w-[52px] tracking-[-0.3px] text-[#605e5c]">82%</span>
      <svg width="21" height="16" viewBox="0 0 21 16" className="mr-[21px]" fill="none" stroke="#605e5c">
        <rect x=".800" y=".800" width="19.400" height="14.400" strokeWidth="1.500" />
        <path d="M3.500 6V3.500H7M14 3.500H17.500V6M17.500 10V12.500H14M7 12.500H3.500V10" strokeWidth="1.200" />
      </svg>
    </footer>
  );
}

export default function App() {
  return (
    <div className="flex h-[988px] w-[1919px] flex-col overflow-hidden bg-white font-['Open_Sans',sans-serif]">
      <Ribbon />
      <div className="flex h-[790px] shrink-0">
        <Rail />
        <div className="flex w-[1600px] flex-col">
          <div className="flex">
            <div className="w-[1349px]"><Canvas /></div>
            <Filters />
          </div>
          <PageTabs />
        </div>
        <Visualizations />
        <aside className="flex w-[41px] flex-col items-center bg-[#f3f2f1] pt-[16px]">
          <Chevrons flip />
          <span className="mt-[18px] text-[18.6px] font-semibold leading-[22px] text-[#252423] [writing-mode:vertical-rl]">Data</span>
        </aside>
      </div>
      <StatusBar />
      <div className="flex h-[11px] items-end border-t border-black bg-[linear-gradient(90deg,#e8ebe8_0%,#e3e5dc_20%,#dfe5a8_37%,#cfe0b4_44%,#e6e2ee_52%,#d9c6e8_68%,#f0d3e6_82%,#f3dcea_86%,#e9e4f8_92%,#e8e4fa_100%)]">
        <i className="ml-[45px] h-[2px] w-[10px] rounded-t-full bg-[#c8323c]" />
        <i className="ml-[954px] h-[2px] w-[10px] rounded-t-full bg-[#3f9b56]" />
      </div>
    </div>
  );
}
